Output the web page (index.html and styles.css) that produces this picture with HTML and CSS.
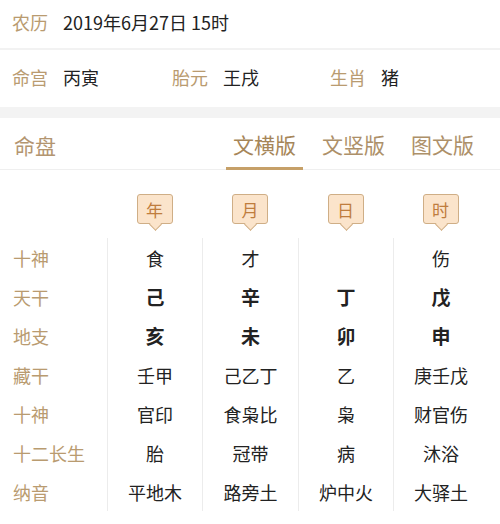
FILE: index.html
```html
<!DOCTYPE html>
<html lang="zh">
<head>
<meta charset="utf-8">
<link rel="stylesheet" href="styles.css">
</head>
<body>
<div class="page">
  <div class="row1">
    <span class="lbl">农历</span>
    <span class="val">2019年6月27日 15时</span>
  </div>
  <div class="row2">
    <div class="grp g1"><span class="lbl">命宫</span><span class="val">丙寅</span></div>
    <div class="grp g2"><span class="lbl">胎元</span><span class="val">王戌</span></div>
    <div class="grp g3"><span class="lbl">生肖</span><span class="val">猪</span></div>
  </div>
  <div class="band"></div>
  <div class="tabbar">
    <span class="title">命盘</span>
    <div class="tabs">
      <span class="tab active">文横版</span>
      <span class="tab">文竖版</span>
      <span class="tab">图文版</span>
    </div>
  </div>
  <div class="heads">
    <div class="hcell"></div>
    <div class="hcell"><span class="tag">年</span></div>
    <div class="hcell"><span class="tag">月</span></div>
    <div class="hcell"><span class="tag">日</span></div>
    <div class="hcell"><span class="tag">时</span></div>
  </div>
  <div class="table">
    <div class="col labels">
      <div class="cell">十神</div>
      <div class="cell">天干</div>
      <div class="cell">地支</div>
      <div class="cell">藏干</div>
      <div class="cell">十神</div>
      <div class="cell">十二长生</div>
      <div class="cell">纳音</div>
    </div>
    <div class="col data">
      <div class="cell">食</div>
      <div class="cell b">己</div>
      <div class="cell b">亥</div>
      <div class="cell">壬甲</div>
      <div class="cell">官印</div>
      <div class="cell">胎</div>
      <div class="cell">平地木</div>
    </div>
    <div class="col data">
      <div class="cell">才</div>
      <div class="cell b">辛</div>
      <div class="cell b">未</div>
      <div class="cell">己乙丁</div>
      <div class="cell">食枭比</div>
      <div class="cell">冠带</div>
      <div class="cell">路旁土</div>
    </div>
    <div class="col data">
      <div class="cell"></div>
      <div class="cell b">丁</div>
      <div class="cell b">卯</div>
      <div class="cell">乙</div>
      <div class="cell">枭</div>
      <div class="cell">病</div>
      <div class="cell">炉中火</div>
    </div>
    <div class="col data">
      <div class="cell">伤</div>
      <div class="cell b">戊</div>
      <div class="cell b">申</div>
      <div class="cell">庚壬戊</div>
      <div class="cell">财官伤</div>
      <div class="cell">沐浴</div>
      <div class="cell">大驿土</div>
    </div>
  </div>
</div>
</body>
</html>
```
FILE: styles.css
```css
* { box-sizing: border-box; margin: 0; padding: 0; }
html, body { background: #fff; }
body {
  width: 500px;
  height: 524px;
  overflow: hidden;
  font-family: "Noto Sans CJK SC", "Noto Sans", sans-serif;
  color: #222;
}
.page { width: 500px; }
.lbl { color: #b99b70; }
.row1 {
  height: 50px;
  display: flex;
  align-items: center;
  padding-left: 12px;
  padding-bottom: 5px;
  font-size: 18px;
  border-bottom: 2px solid #f2f2f2;
}
.row1 .lbl { width: 51px; }
.row2 {
  height: 57px;
  display: flex;
  align-items: center;
  padding-left: 12px;
  padding-bottom: 4px;
  font-size: 18px;
}
.grp { display: flex; }
.grp .lbl { width: 51px; }
.g1 { width: 160px; }
.g2 { width: 158px; }
.band { height: 11px; background: #f3f3f3; }
.tabbar {
  height: 52px;
  display: flex;
  align-items: stretch;
  justify-content: space-between;
  border-bottom: 1px solid #efefef;
  padding-left: 14px;
  font-size: 21px;
}
.title { color: #b39570; display: flex; align-items: center; padding-top: 3px; }
.tabs { display: flex; gap: 12px; padding-right: 19px; }
.tab {
  width: 77px;
  text-align: center;
  color: #ad9069;
  display: flex;
  align-items: center;
  justify-content: center;
  padding-top: 2px;
  border-bottom: 3px solid transparent;
  margin-bottom: -1px;
}
.tab.active { color: #a68659; border-bottom-color: #c6a068; }
.heads {
  display: grid;
  grid-template-columns: 107px 95px 96px 95px 95px;
  height: 68px;
  padding-top: 24px;
}
.hcell { display: flex; justify-content: center; }
.tag {
  position: relative;
  width: 36px;
  height: 30px;
  border: 1.5px solid #cfae86;
  border-radius: 3px;
  background: #fbe4cb;
  color: #bf7d3e;
  font-size: 17px;
  display: flex;
  align-items: center;
  justify-content: center;
}
.tag::after {
  content: "";
  position: absolute;
  left: 50%;
  bottom: -6px;
  width: 8px;
  height: 8px;
  margin-left: -4px;
  background: #fbe4cb;
  border-right: 1.5px solid #cfae86;
  border-bottom: 1.5px solid #cfae86;
  transform: rotate(45deg);
}
.table {
  display: grid;
  grid-template-columns: 107px 95px 96px 95px 95px;
}
.col { display: flex; flex-direction: column; }
.data { border-left: 1px solid #ececec; align-items: center; }
.cell {
  height: 39px;
  display: flex;
  align-items: center;
  font-size: 18px;
}
.labels { padding-left: 13px; color: #b99b70; }
.b { font-weight: bold; font-size: 19px; }
```
